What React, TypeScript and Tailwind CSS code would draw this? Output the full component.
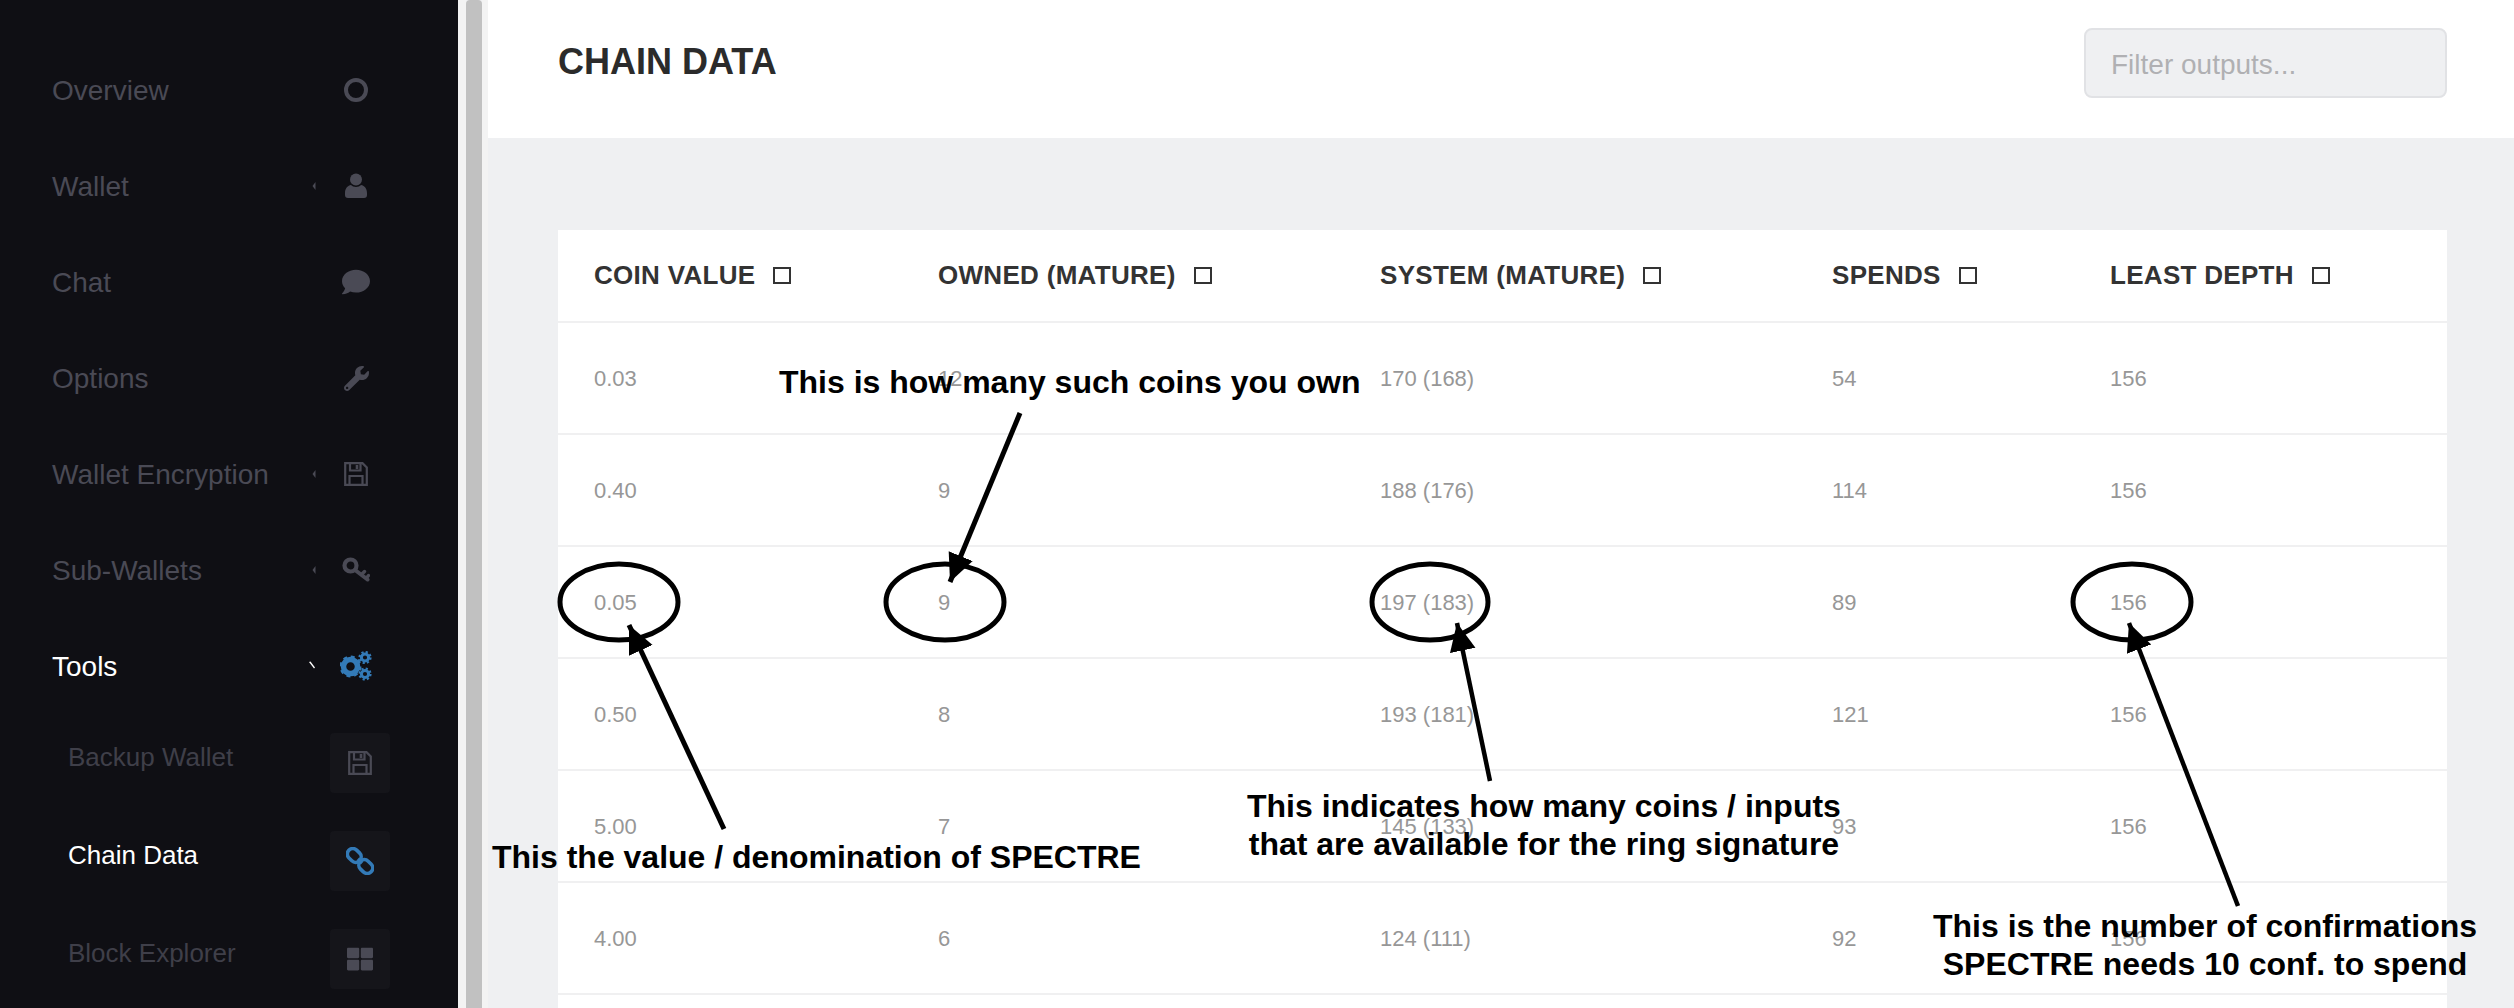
import { FaComment, FaWrench, FaThLarge } from 'react-icons/fa';
import type { ReactNode } from 'react';

const font = { fontFamily: '"Liberation Sans", Arial, sans-serif' };

const columns = [
  { label: 'COIN VALUE', width: 'w-[344px]' },
  { label: 'OWNED (MATURE)', width: 'w-[442px]' },
  { label: 'SYSTEM (MATURE)', width: 'w-[452px]' },
  { label: 'SPENDS', width: 'w-[278px]' },
  { label: 'LEAST DEPTH', width: 'w-[373px]' },
];

const rows = [
  ['0.03', '12', '170 (168)', '54', '156'],
  ['0.40', '9', '188 (176)', '114', '156'],
  ['0.05', '9', '197 (183)', '89', '156'],
  ['0.50', '8', '193 (181)', '121', '156'],
  ['5.00', '7', '145 (133)', '93', '156'],
  ['4.00', '6', '124 (111)', '92', '156'],
];

const UserIcon = () => (
  <svg width="24" height="26" viewBox="0 0 24 26" fill="currentColor">
    <circle cx="12" cy="6.5" r="6" />
    <path d="M1 20 C1 15 4 12.5 7 12 C9 14.5 15 14.5 17 12 C20 12.5 23 15 23 20 V22 C23 24 22 25 20 25 H4 C2 25 1 24 1 22 Z" />
  </svg>
);

const SaveIcon = () => (
  <svg width="24" height="24" viewBox="0 0 24 24" fill="none" stroke="currentColor" strokeWidth="2.2">
    <path d="M1.2 1.2 H18.5 L22.8 5.5 V22.8 H1.2 Z" />
    <path d="M6 1.2 V8.5 H16.5 V1.2" />
    <path d="M5.5 22.8 V14 H18.5 V22.8" />
    <path d="M13 3 V7" strokeWidth="2.6" />
  </svg>
);

const KeyIcon = () => (
  <svg width="28" height="26" viewBox="0 0 28 26" fill="none" stroke="currentColor" strokeLinecap="round">
    <circle cx="8.5" cy="8.5" r="6" strokeWidth="4.2" />
    <path d="M13 13 L25.5 22.5" strokeWidth="4" />
    <path d="M19.5 17.5 L22.5 14.5 M24.5 21 L26.5 18.5" strokeWidth="3.4" />
  </svg>
);

const CogsIcon = () => (
  <svg width="32" height="30" viewBox="0 0 32 30" fill="none" stroke="currentColor">
    <circle cx="10.5" cy="15.5" r="7" strokeWidth="5.5" />
    <circle cx="10.5" cy="15.5" r="9.5" strokeWidth="3" strokeDasharray="3.73 3.73" />
    <circle cx="25" cy="6.5" r="3.6" strokeWidth="3" />
    <circle cx="25" cy="6.5" r="5.5" strokeWidth="2.2" strokeDasharray="2.16 2.16" />
    <circle cx="25" cy="23" r="3.6" strokeWidth="3" />
    <circle cx="25" cy="23" r="5.5" strokeWidth="2.2" strokeDasharray="2.16 2.16" />
  </svg>
);

const LinkIcon = () => (
  <svg width="28" height="28" viewBox="0 0 28 28" fill="none" stroke="currentColor" strokeWidth="3.6">
    <g transform="rotate(44 14 14)">
      <rect x="-1.5" y="8.5" width="15" height="11" rx="5.5" />
      <rect x="14.5" y="8.5" width="15" height="11" rx="5.5" />
      <path d="M11 14 H17" />
    </g>
  </svg>
);

const Chevron = ({ open }: { open?: boolean }) => (
  <svg width="8" height="10" viewBox="0 0 8 10" className="mr-[10px] shrink-0">
    {open ? (
      <path d="M1 1 L2.5 0.5 L7 6.5 L6 7.5 Z" fill="#ffffff" />
    ) : (
      <path d="M7.5 1 L4.5 5 L7.5 9 Z" fill="#4a4a55" />
    )}
  </svg>
);

const NavItem = ({ label, icon, chevron, open }: { label: string; icon: ReactNode; chevron?: boolean; open?: boolean }) => (
  <div className="flex h-[96px] items-center pl-[52px] pr-[72px]">
    <span className={`flex-1 pt-[2px] text-[28px] ${open ? 'text-white' : 'text-[#4a4a55]'}`}>{label}</span>
    {chevron && <Chevron open={open} />}
    <span className={`flex w-[60px] items-center justify-center ${open ? 'text-[#337ab7]' : 'text-[#4a4a55]'}`}>{icon}</span>
  </div>
);

const SubItem = ({ label, icon, active }: { label: string; icon: ReactNode; active?: boolean }) => (
  <div className="flex h-[98px] items-start pl-[68px] pr-[68px]">
    <span className={`mt-[5px] flex-1 text-[26px] ${active ? 'text-white' : 'text-[#3f3f49]'}`}>{label}</span>
    <span className={`flex h-[60px] w-[60px] items-center justify-center rounded bg-[#15151a] ${active ? 'text-[#337ab7]' : 'text-[#4a4a55]'}`}>{icon}</span>
  </div>
);

const Sidebar = () => (
  <aside className="h-full w-[458px] shrink-0 bg-[#0f0f14] pt-[42px]">
    <NavItem label="Overview" icon={<span className="block h-[24px] w-[24px] rounded-full border-[4px] border-[#4a4a55]" />} />
    <NavItem label="Wallet" chevron icon={<UserIcon />} />
    <NavItem label="Chat" icon={<FaComment size={28} />} />
    <NavItem label="Options" icon={<FaWrench size={25} />} />
    <NavItem label="Wallet Encryption" chevron icon={<SaveIcon />} />
    <NavItem label="Sub-Wallets" chevron icon={<KeyIcon />} />
    <NavItem label="Tools" chevron open icon={<CogsIcon />} />
    <div className="pt-[19px]">
      <SubItem label="Backup Wallet" icon={<SaveIcon />} />
      <SubItem label="Chain Data" active icon={<LinkIcon />} />
      <SubItem label="Block Explorer" icon={<FaThLarge size={26} />} />
    </div>
  </aside>
);

const Annotations = () => (
  <svg width="2514" height="1008" className="pointer-events-none absolute left-0 top-0">
    <defs>
      <marker id="head" markerUnits="userSpaceOnUse" markerWidth="32" markerHeight="30" refX="28" refY="13" orient="auto">
        <path d="M0 0 L28 13 L0 26 Z" fill="#000" />
      </marker>
    </defs>
    <g fill="none" stroke="#000" strokeWidth="5">
      <ellipse cx="619" cy="602" rx="59" ry="38" />
      <ellipse cx="945" cy="602" rx="59" ry="38" />
      <ellipse cx="1430" cy="602" rx="58" ry="38" />
      <ellipse cx="2132" cy="602" rx="59" ry="38" />
      <line x1="1020" y1="413" x2="950" y2="582" markerEnd="url(#head)" />
      <line x1="724" y1="829" x2="629" y2="625" markerEnd="url(#head)" />
      <line x1="1490" y1="781" x2="1457" y2="623" strokeWidth="4.5" markerEnd="url(#head)" />
      <line x1="2238" y1="906" x2="2129" y2="623" strokeWidth="4.5" markerEnd="url(#head)" />
    </g>
  </svg>
);

const labelClass = 'absolute whitespace-nowrap text-center text-[32px] font-bold leading-[38px] text-black';

export default function App() {
  return (
    <div style={font} className="relative flex h-[1008px] w-[2514px] overflow-hidden bg-[#eff0f2]">
      <Sidebar />
      <div className="h-full w-[8px] shrink-0 bg-[#f3f3f3]" />
      <div className="h-full w-[16px] shrink-0 rounded-t bg-[#c1c1c1]" />
      <div className="h-full w-[6px] shrink-0 bg-[#f3f3f3]" />

      <main className="min-w-0 flex-1">
        <header className="flex h-[138px] items-start justify-between bg-white pl-[70px] pr-[67px] pt-[28px]">
          <h1 className="mt-[12px] text-[36px] font-bold leading-[44px] text-[#2b2b2b]">CHAIN DATA</h1>
          <input
            placeholder="Filter outputs..."
            className="h-[70px] w-[363px] rounded-lg border-2 border-[#e1e2e5] bg-[#eff0f2] px-[25px] pt-[3px] text-[28px] outline-none placeholder:text-[#b0b0b3]"
          />
        </header>

        <div className="pl-[70px] pt-[92px]">
          <table className="w-[1889px] table-fixed border-collapse bg-white">
            <thead>
              <tr className="h-[92px]">
                {columns.map((col) => (
                  <th key={col.label} className={`${col.width} pl-[36px] text-left text-[26px] font-bold tracking-[0.3px] text-[#333333]`}>
                    <span className="inline-flex items-center gap-[18px]">
                      {col.label}
                      <span className="h-[17px] w-[18px] border-2 border-[#333333]" />
                    </span>
                  </th>
                ))}
              </tr>
            </thead>
            <tbody>
              {rows.map((row) => (
                <tr key={row[0]} className="h-[112px] border-t-2 border-[#f0f0f1]">
                  {row.map((cell, i) => (
                    <td key={i} className="pl-[36px] pt-[1px] text-[22px] text-[#979797]">{cell}</td>
                  ))}
                </tr>
              ))}
              <tr className="h-[112px] border-t-2 border-[#f0f0f1]">
                <td colSpan={5} />
              </tr>
            </tbody>
          </table>
        </div>
      </main>

      <Annotations />
      <div className={`${labelClass} left-[779px] top-[363px]`}>This is how many such coins you own</div>
      <div className={`${labelClass} left-[492px] top-[838px]`}>This the value / denomination of SPECTRE</div>
      <div className={`${labelClass} left-[1247px] top-[787px]`}>This indicates how many coins / inputs<br />that are available for the ring signature</div>
      <div className={`${labelClass} left-[1933px] top-[907px]`}>This is the number of confirmations<br />SPECTRE needs 10 conf. to spend</div>
    </div>
  );
}
